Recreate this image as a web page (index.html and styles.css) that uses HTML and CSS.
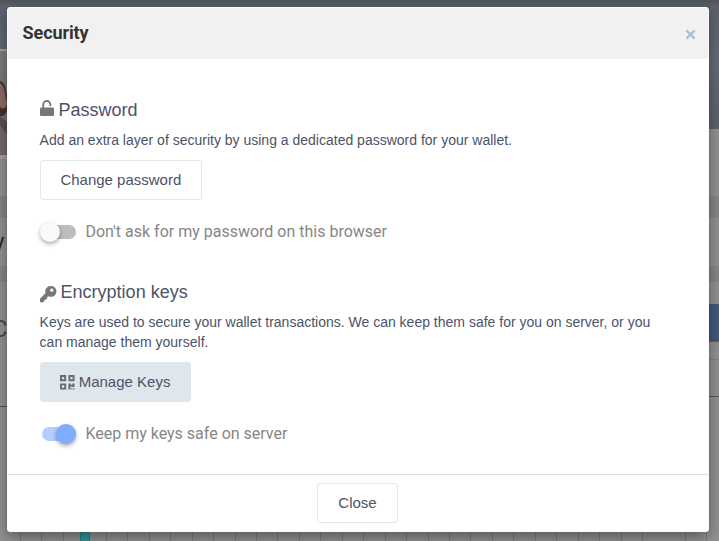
FILE: index.html
```html
<!DOCTYPE html>
<html lang="en">
<head>
<meta charset="utf-8">
<title>Security</title>
<link rel="stylesheet" href="styles.css">
</head>
<body>
<div class="page">
  <div class="cover">
    <svg class="avatar" width="8" height="110" viewBox="0 0 8 110" aria-hidden="true">
      <defs><linearGradient id="wall" x2="0" y2="1"><stop offset="0" stop-color="#827f7e"/><stop offset="1" stop-color="#736b6a"/></linearGradient></defs>
      <rect width="8" height="110" fill="#a0a5a7"/>
      <rect y="2" width="8" height="104" fill="url(#wall)"/>
      <path d="M0 32Q5 33 6 42L8 50V60Q5 68 0 67Z" fill="#46322e"/>
      <path d="M0 34Q4 37 5 44L7 55Q5 62 0 58Z" fill="#8f6c65"/>
      <path d="M0 67L8 74V106H0Z" fill="#5a5053"/>
      <path d="M0 76L8 87V106H0Z" fill="#74696b"/>
    </svg>
  </div>
  <div class="strip"></div>
  <div class="band"></div>
  <div class="title-row"><span class="peek-y">y</span></div>
  <div class="band thin"></div>
  <div class="content">
    <div class="left"><span class="peek-c">C</span></div>
    <div class="right"><div class="action"></div><div class="rule"></div><div class="tail"></div></div>
  </div>
  <div class="chart"><div class="bar"></div></div>
</div>
<section class="modal" role="dialog" aria-labelledby="heading">
  <header class="head">
    <h1 id="heading">Security</h1>
    <svg class="dismiss" width="11" height="11" viewBox="0 0 11 11" aria-hidden="true"><path d="M1.4 1.4L9.6 9.6M9.6 1.4L1.4 9.6"/></svg>
  </header>
  <div class="body">
    <h2><svg class="lock" width="15" height="17" viewBox="0 0 15 17" aria-hidden="true"><path d="M3.2 9V4.6A3.6 3.6 0 0 1 10.4 4.6V6" fill="none" stroke="#777" stroke-width="1.9"/><rect y="7.5" width="14" height="8.5" rx="1.2" fill="#777"/></svg><span>Password</span></h2>
    <p>Add an extra layer of security by using a dedicated password for your wallet.</p>
    <button class="btn" type="button">Change password</button>
    <div class="option"><i class="switch"></i><span>Don't ask for my password on this browser</span></div>
    <h2 class="keys"><svg class="key" width="17" height="17" viewBox="0 0 17 17" aria-hidden="true"><path fill="#777" fill-rule="evenodd" d="M10.6 0A5.4 5.4 0 0 0 5.5 7.1L0 12.8V16.2H3.8V14.6H5.5V12.9H7.2V11.1L8.8 10.3A5.4 5.4 0 1 0 10.6 0ZM11.8 2.5A1.65 1.65 0 1 1 11.8 5.8A1.65 1.65 0 0 1 11.8 2.5Z"/></svg><span>Encryption keys</span></h2>
    <p class="wide">Keys are used to secure your wallet transactions. We can keep them safe for you on server, or you can manage them yourself.</p>
    <button class="btn solid" type="button"><svg width="15" height="15" viewBox="0 0 15 15" aria-hidden="true"><g fill="none" stroke="#686c70" stroke-width="1.9"><path d="M1 1H5.2V5.2H1ZM9.4 1H13.6V5.2H9.4ZM1 9.4H5.2V13.6H1Z"/></g><path d="M8.4 8.4H10.8V9.8H12.4V8.4H14.5V12H11.8V11.4H10.4V14.5H8.4ZM11.2 13.2H12.4V14.5H11.2ZM13.2 13.2H14.5V14.5H13.2Z" fill="#686c70"/></svg><span>Manage Keys</span></button>
    <div class="option"><i class="switch on"></i><span>Keep my keys safe on server</span></div>
  </div>
  <footer class="foot"><button class="btn close" type="button">Close</button></footer>
</section>
</body>
</html>
```
FILE: styles.css
```css
* { box-sizing: border-box; }
body { margin: 0; overflow: hidden; color: #4d5368; font-family: "Liberation Sans", Arial, sans-serif; }
.page { width: 719px; height: 541px; display: flex; flex-direction: column; background: #929292; }
.cover { height: 129px; flex: none; padding-top: 49px; background: linear-gradient(#4e525b, #5e616d 6px, #666b7b 60px, #5d616e); }
.avatar { display: block; position: relative; }
.strip { height: 68px; flex: none; border-bottom: 1px solid #868686; }
.band { height: 21px; flex: none; background: #878787; }
.thin { height: 16px; }
.title-row { height: 48px; flex: none; overflow: hidden; }
.peek-y, .peek-c { display: block; font-family: Roboto, sans-serif; line-height: 48px; }
.peek-y { margin-left: -6px; color: #252525; font-size: 22px; }
.peek-c { margin-left: -8px; padding-top: 23px; color: #4a4a4a; font-size: 24px; }
.content { height: 250px; flex: none; display: flex; justify-content: space-between; }
.left { width: 20px; height: 125px; border-bottom: 1px solid #505050; }
.right { width: 20px; padding-top: 22px; }
.action { height: 37px; background: #405a80; border-bottom: 1px solid #505254; box-shadow: 0 1px 1px #6b6b6b; }
.rule { height: 19px; border-bottom: 1px solid #848484; }
.tail { height: 37px; border-bottom: 1px solid #555; }
.chart { flex: 1; padding-left: 80px; background: repeating-linear-gradient(90deg, transparent 0 20px, #7c7c7c 20px 21px, transparent 21px 21.45px); }
.bar { width: 10px; height: 9px; background: #35959a; border: solid #28868c; border-width: 0 1px; }
.modal { position: absolute; left: 7px; top: 7px; width: 702px; height: 525px; display: flex; flex-direction: column; overflow: hidden; border: 1px solid #fafafa; border-radius: 3px; background: #fff; box-shadow: 0 5px 15px rgba(0,0,0,.4); }
.head { height: 51px; flex: none; display: flex; align-items: center; justify-content: space-between; padding: 0 12px 0 14.6px; background: #f1f1f1; }
h1 { margin: -2px 0 0; color: #333; font: 700 18px/26px Roboto, sans-serif; letter-spacing: -.1px; }
.dismiss { margin-top: 2px; }
.dismiss path { fill: none; stroke: #a5bedd; stroke-width: 2.2; }
.body { flex: 1; padding: 39px 32px 0 31.6px; }
h2 { height: 24px; margin: 0; display: flex; align-items: center; gap: 4px; font-size: 18px; font-weight: 400; line-height: 24px; }
.lock { margin-top: -3px; }
.key { margin-top: 4px; }
p { margin: 8px 0 10px; font-size: 14px; line-height: 20px; }
.wide { width: 625px; }
.keys { margin-top: 36px; }
.btn { height: 40px; display: flex; align-items: center; gap: 3.5px; padding: 0 19.8px; border: 1px solid #dfe6ec; border-radius: 3px; background: #fff; color: #4d5368; font: 15px/20px "Liberation Sans", Arial, sans-serif; }
.solid { padding: 0 19.6px; background: #dfe6ec; }
.option { height: 24px; margin-top: 20px; display: flex; align-items: center; gap: 9.4px; color: #868686; font: 16px/24px Roboto, sans-serif; }
.switch { position: relative; width: 34px; height: 14px; margin-left: 2.4px; border-radius: 7px; background: #bdbdbd; }
.switch::before { content: ""; position: absolute; left: -2px; top: -3px; width: 20px; height: 20px; border-radius: 50%; background: #fafafa; box-shadow: 0 2px 4px rgba(0,0,0,.35); }
.on { background: #b3ceff; }
.on::before { left: 14px; background: #80adff; }
.foot { height: 57px; flex: none; display: flex; justify-content: center; padding-top: 8px; border-top: 1px solid #d9dddf; }
.close { margin-left: -1px; padding: 0 20px; }
```
